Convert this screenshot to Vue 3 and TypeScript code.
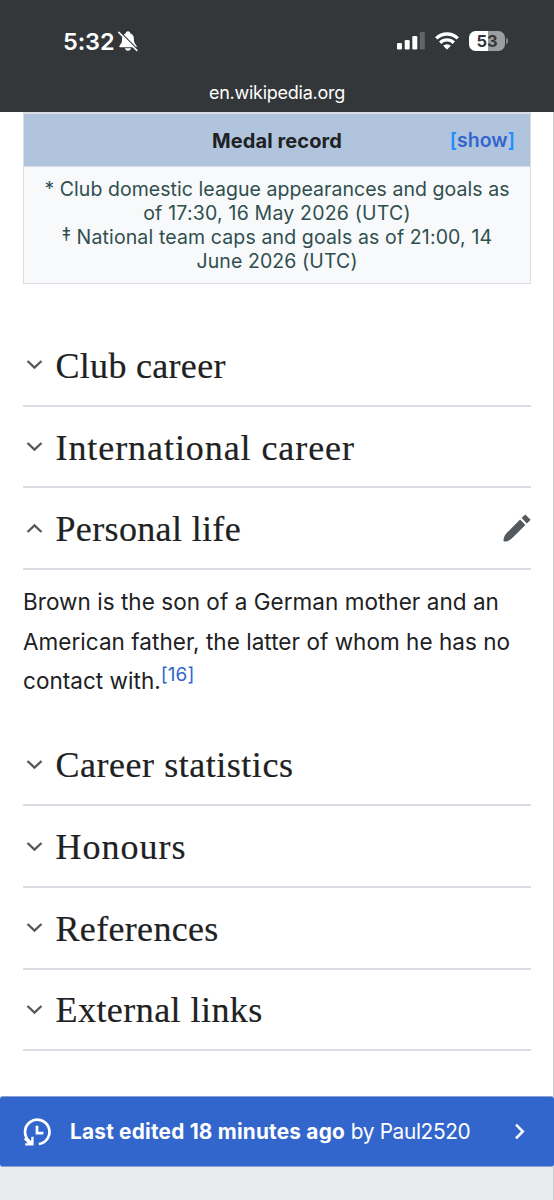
<script setup lang="ts">
interface Section {
  title: string
  tracking: string
  open?: boolean
}

const careerSections: Section[] = [
  { title: 'Club career', tracking: '0.3px' },
  { title: 'International career', tracking: '0.93px' },
  { title: 'Personal life', tracking: '0.35px', open: true },
]

const closingSections: Section[] = [
  { title: 'Career statistics', tracking: '0.53px' },
  { title: 'Honours', tracking: '1px' },
  { title: 'References', tracking: '0.33px' },
  { title: 'External links', tracking: '0.45px' },
]
</script>

<template>
  <div class="screen">
    <header class="browser-bar">
      <div class="status">
        <div class="clock">
          <span class="time">5:32</span>
          <svg class="bell" width="20" height="22" viewBox="0 0 20 22">
            <path d="M1.200 16.600c0-1.500 2.300-2.300 2.700-5.200.3-4.500.6-6.800 3.700-7.800C7.900 2 8.700 1.200 10 1.200s2.100.8 2.400 2.400c3.100 1 3.500 3.300 3.700 7.800.4 2.900 2.700 3.700 2.700 5.200 0 .5-.4.7-1 .7H2.200c-.6 0-1-.2-1-.7ZM6.900 18.300h6.200c-.4 1.600-1.500 2.500-3.100 2.500s-2.700-.9-3.100-2.500Z" fill="#fff" />
            <path d="M1.700 1.500 19.700 19.500" stroke="#34373a" stroke-width="1.300" />
            <path d="m.8 2.400 18 18" stroke="#fff" stroke-width="1.500" stroke-linecap="round" />
          </svg>
        </div>
        <div class="indicators">
          <svg width="28" height="18" viewBox="0 0 28 18">
            <rect x="0" y="11" width="5" height="6.500" rx="1.300" fill="#fff" />
            <rect x="7.700" y="8" width="5" height="9.500" rx="1.300" fill="#fff" />
            <rect x="15.300" y="4" width="5" height="13.500" rx="1.300" fill="#fff" />
            <rect x="22.800" y="0" width="5" height="17.500" rx="1.300" fill="#626567" />
          </svg>
          <svg class="wifi" width="24" height="18" viewBox="0 0 24 18">
            <g fill="none" stroke="#fff" stroke-width="3.300">
              <path d="M1.200 6.400a15.400 15.400 0 0 1 21.600 0" />
              <path d="M5.200 10.700a9.700 9.700 0 0 1 13.600 0" />
            </g>
            <path d="M8.100 13.800a5.500 5.500 0 0 1 7.800 0L12.600 17.100q-.6.600-1.200 0Z" fill="#fff" />
          </svg>
          <div class="battery">
            <span class="charge">53</span>
            <span class="nub"></span>
          </div>
        </div>
      </div>
      <div class="address">en.wikipedia.org</div>
    </header>

    <main class="page">
      <section class="infobox">
        <div class="medal">
          <span class="medal-title">Medal record</span>
          <span class="toggle">[<a>show</a>]</span>
        </div>
        <div class="notes">
          <div class="note n1">* Club domestic league appearances and goals as</div>
          <div class="note n2">of 17:30, 16 May 2026 (UTC)</div>
          <div class="note n3"><span class="dagger">‡</span> National team caps and goals as of 21:00, 14</div>
          <div class="note n4">June 2026 (UTC)</div>
        </div>
      </section>

      <div class="sections">
        <div v-for="s in careerSections" :key="s.title" class="section">
          <svg class="chevron" :class="{ open: s.open }" width="17" height="11" viewBox="0 0 17 11">
            <path d="m1.500 2 7 6.700 7-6.700" />
          </svg>
          <h2 :style="{ letterSpacing: s.tracking }">{{ s.title }}</h2>
          <svg v-if="s.open" class="pencil" width="28" height="28" viewBox="0 0 28 28">
            <path d="m22.300.4 5.300 5.300-3.700 3.700-5.300-5.300ZM17.100 5.600l5.300 5.300L9 24.300c-2.300 2.300-4.900 3.100-7.500 3.200-.7 0-1-.3-1-.9.100-2.700.9-5.300 3.200-7.600Z" />
          </svg>
        </div>
      </div>

      <p class="body">
        <span class="line b1">Brown is the son of a German mother and an</span>
        <span class="line b2">American father, the latter of whom he has no</span>
        <span class="line b3">contact with.<sup>[16]</sup></span>
      </p>

      <div class="sections closing">
        <div v-for="s in closingSections" :key="s.title" class="section">
          <svg class="chevron" width="17" height="11" viewBox="0 0 17 11">
            <path d="m1.500 2 7 6.700 7-6.700" />
          </svg>
          <h2 :style="{ letterSpacing: s.tracking }">{{ s.title }}</h2>
        </div>
      </div>
    </main>

    <a class="last-edited">
      <svg class="history" width="28" height="28" viewBox="0 0 28 28">
        <g fill="none" stroke="#fff" stroke-width="2.700">
          <path d="M6.600 23.400A12.200 12.200 0 1 1 15.800 26" />
          <path d="M14 7.700v7.500h6.400" />
        </g>
        <path d="m2.400 19 4.400 4.400 1.500-1.500V18.700h2.300v8.700H2.200v-2.200h2.700L1.100 21.400Z" fill="#fff" />
      </svg>
      <span class="edited"><b>Last edited 18 minutes ago</b> <span class="by">by Paul2520</span></span>
      <svg class="go" width="11" height="17" viewBox="0 0 11 17">
        <path d="m2 1.700 6.800 6.800L2 15.300" fill="none" stroke="#fff" stroke-width="2.500" />
      </svg>
    </a>
    <div class="tail"></div>
  </div>
</template>

<style>
body {
  margin: 0;
  background: #eaebee;
}
</style>

<style scoped>
.screen {
  width: 554px;
  height: 1200px;
  overflow: hidden;
  display: flex;
  flex-direction: column;
  box-sizing: border-box;
  font-family: Inter, 'Liberation Sans', sans-serif;
  color: #202122;
  white-space: nowrap;
}

.browser-bar {
  height: 112px;
  flex: none;
  background: #34373a;
  color: #fff;
}

.status {
  height: 82px;
  padding: 0 49px 0 63px;
  display: flex;
  justify-content: space-between;
  align-items: center;
}

.clock,
.indicators {
  display: flex;
  align-items: center;
}

.time {
  font-size: 23.5px;
  font-weight: 600;
  line-height: 30px;
  width: 55px;
  letter-spacing: -0.1px;
  position: relative;
  top: 1px;
}

.wifi {
  margin-left: 10px;
}

.battery {
  margin-left: 10px;
  width: 36px;
  height: 20px;
  border-radius: 6.5px;
  background: linear-gradient(to right, #fff 53%, #9b9d9e 53%);
  position: relative;
  display: flex;
  align-items: center;
  justify-content: center;
}

.charge {
  color: #34373a;
  font-size: 16.5px;
  font-weight: 700;
  line-height: 20px;
}

.nub {
  position: absolute;
  left: 37px;
  top: 7px;
  width: 2px;
  height: 6px;
  border-radius: 0 2px 2px 0;
  background: #85878a;
}

.address {
  text-align: center;
  font-size: 18px;
  line-height: 22px;
  letter-spacing: -0.25px;
}

.page {
  height: 984px;
  flex: none;
  background: #fff;
  border-right: 1px solid #c8ccd1;
  padding: 0 22px 0 23px;
}

.infobox {
  height: 172px;
  box-sizing: border-box;
  border: solid #dadde3;
  border-width: 0 1px 1px;
  background: #f8f9fa;
}

.medal {
  height: 52px;
  border-top: 2px solid #dadde3;
  border-bottom: 1px solid #dadde3;
  background: #b0c4de;
  display: grid;
  grid-template-columns: 1fr auto 1fr;
  align-items: center;
}

.medal-title {
  grid-column: 2;
  padding-top: 1px;
  font-size: 20px;
  font-weight: 700;
  letter-spacing: 0.1px;
}

.toggle {
  grid-column: 3;
  justify-self: end;
  margin-right: 15px;
  font-size: 19.5px;
  font-weight: 600;
  color: #1e90ff;
}

.toggle a {
  color: #36c;
}

.notes {
  padding-top: 10px;
  text-align: center;
  font-size: 19.5px;
  line-height: 24px;
  color: #2f4f4f;
}

.note {
  height: 24px;
}

.n1 {
  letter-spacing: 0.05px;
}

.n2 {
  letter-spacing: 0.2px;
}

.n3 {
  letter-spacing: 0.13px;
}

.n4 {
  letter-spacing: 0.1px;
}

.dagger {
  font-size: 18.5px;
  line-height: 0;
  position: relative;
  top: -3px;
}

.sections {
  padding-top: 41px;
}

.sections.closing {
  padding-top: 0;
}

.section {
  height: 81.7px;
  box-sizing: border-box;
  border-bottom: 2px solid #dadde3;
  display: flex;
  align-items: center;
  padding-left: 3px;
}

.section h2 {
  margin: 0 0 0 12.5px;
  padding-top: 2px;
  font: 400 36px/44px 'Liberation Serif', serif;
  -webkit-text-stroke: 0.2px #202122;
}

.chevron {
  fill: none;
  stroke: #54595d;
  stroke-width: 2.3;
}

.chevron.open {
  transform: rotate(180deg);
}

.pencil {
  margin-left: auto;
  fill: #54595d;
}

.body {
  margin: 0;
  height: 154.5px;
  box-sizing: border-box;
  padding-top: 12px;
  font-size: 22.5px;
  line-height: 39.5px;
}

.line {
  display: block;
  letter-spacing: 0.04px;
}

sup {
  font-size: 19px;
  line-height: 0;
  color: #36c;
  vertical-align: 8px;
}

.last-edited {
  flex: none;
  height: 71px;
  box-sizing: border-box;
  border: solid #88a3d4;
  border-width: 1px 0;
  border-radius: 3px;
  background: #36c;
  color: #fff;
  display: flex;
  align-items: center;
  padding: 0 29px 0 23px;
}

.edited {
  margin-left: 19px;
  font-size: 20.8px;
}

.edited b {
  font-weight: 650;
  letter-spacing: 0.22px;
}

.by {
  letter-spacing: -0.35px;
}

.go {
  margin-left: auto;
}

.tail {
  flex: 1;
  background: #eaebee;
  border-right: 1px solid #c8ccd1;
}
</style>
